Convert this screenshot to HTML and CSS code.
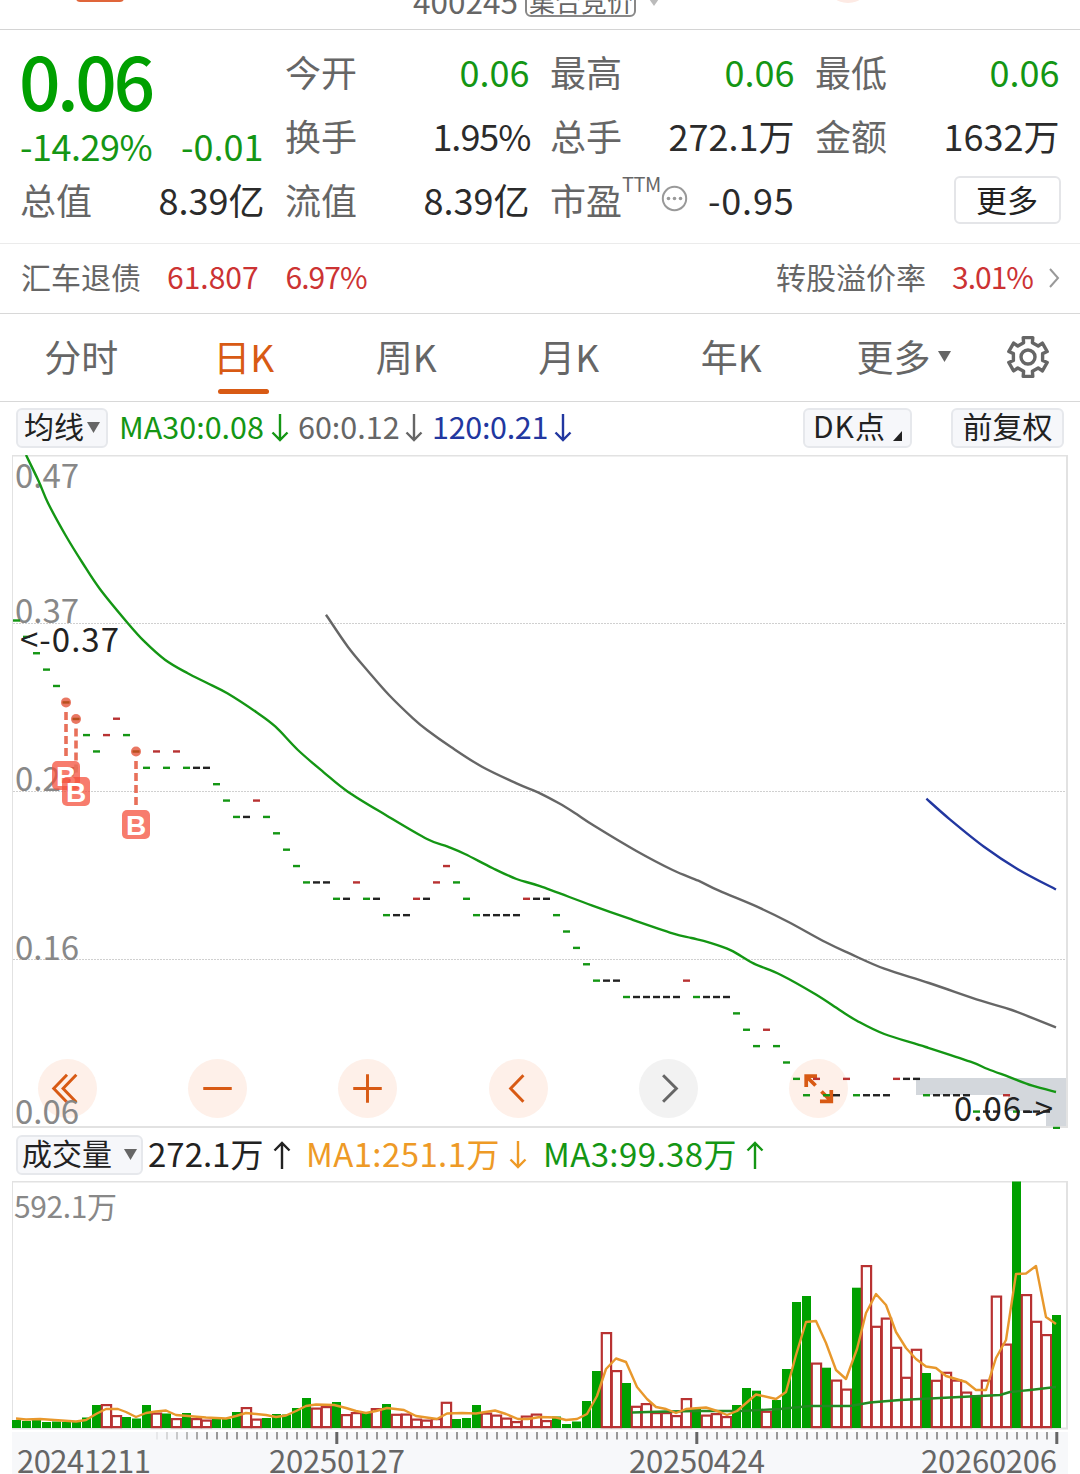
FILE: index.html
```html
<!DOCTYPE html>
<html lang="zh-CN">
<head>
    <meta charset="UTF-8">
    <meta name="viewport" content="width=device-width, initial-scale=1.0">
    <title>400245 日K</title>
    <link rel="stylesheet" href="styles.css">
</head>
<body>
    <header class="titlebar">
        <div class="titlebar-inner">
            <span class="title-badge"></span>
            <span class="code">400245</span>
            <span class="tag">集合竞价</span>
            <svg class="title-caret" width="14" height="10" viewBox="0 0 14 10"><path d="M0 0H14L7 10Z" fill="#bbb"/></svg>
            <span class="title-dot"></span>
        </div>
    </header>

    <section class="quote">
        <div class="price">
            <div class="last">0.06</div>
            <div class="change"><span class="change-rate">-14.29%</span><span>-0.01</span></div>
        </div>
        <div class="cell"><span>今开</span><b class="green">0.06</b></div>
        <div class="cell"><span>最高</span><b class="green">0.06</b></div>
        <div class="cell"><span>最低</span><b class="green">0.06</b></div>
        <div class="cell"><span>换手</span><b class="pct">1.95%</b></div>
        <div class="cell"><span>总手</span><b>272.1万</b></div>
        <div class="cell"><span>金额</span><b>1632万</b></div>
        <div class="cell"><span>总值</span><b>8.39亿</b></div>
        <div class="cell"><span>流值</span><b>8.39亿</b></div>
        <div class="cell">
            <span class="pe">市盈<sup>TTM</sup>
                <svg width="27" height="27" viewBox="0 0 27 27"><circle cx="13.5" cy="13.5" r="11.7" fill="none" stroke="#999" stroke-width="2"/><g fill="#999"><circle cx="7.5" cy="13.5" r="1.8"/><circle cx="13.5" cy="13.5" r="1.8"/><circle cx="19.5" cy="13.5" r="1.8"/></g></svg>
            </span>
            <b class="loss">-0.95</b>
        </div>
        <div class="cell cell-more"><button class="more">更多</button></div>
    </section>

    <section class="bond">
        <span class="bond-name">汇车退债</span>
        <span class="red bond-price">61.807</span>
        <span class="red bond-rate">6.97%</span>
        <span class="bond-label">转股溢价率</span>
        <span class="red bond-premium">3.01%</span>
        <svg width="12" height="20" viewBox="0 0 12 20"><path d="M2 1L10 10L2 19" fill="none" stroke="#999" stroke-width="2"/></svg>
    </section>

    <nav class="tabs">
        <a>分时</a>
        <a class="active">日K</a>
        <a>周K</a>
        <a>月K</a>
        <a>年K</a>
        <a class="tab-more">更多<svg width="13" height="11" viewBox="0 0 13 11"><path d="M0 0H13L6.5 11Z" fill="#666"/></svg></a>
        <a class="tab-gear">
            <svg width="46" height="46" viewBox="-23 -23 46 46" fill="none" stroke="#666" stroke-width="3.4" stroke-linejoin="round">
                <path id="gear"/>
                <circle r="7"/>
            </svg>
        </a>
    </nav>

    <section class="legend legend-ma">
        <button class="chip chip-ma">均线<svg width="13" height="11" viewBox="0 0 13 11"><path d="M0 0H13L6.5 11Z" fill="#666"/></svg></button>
        <span class="legend-item ma30">MA30:0.08<svg class="arrow"><use href="#down"/></svg></span>
        <span class="legend-item ma60">60:0.12<svg class="arrow"><use href="#down"/></svg></span>
        <span class="legend-item ma120">120:0.21<svg class="arrow"><use href="#down"/></svg></span>
        <button class="chip chip-dk">DK点<svg width="9" height="10" viewBox="0 0 9 10"><path d="M9 0V10H0Z" fill="#222"/></svg></button>
        <button class="chip chip-adjust">前复权</button>
    </section>

    <section class="kline">
        <div class="tools">
            <button><svg viewBox="-30 -30 60 60"><path d="M-0.500 -14L-14 0L-0.500 14M9 -14L-4.500 0L9 14"/></svg></button>
            <button><svg viewBox="-30 -30 60 60"><path d="M-14.500 0H14.500"/></svg></button>
            <button><svg viewBox="-30 -30 60 60"><path d="M-14.500 0H14.500M0 -14.500V14.500"/></svg></button>
            <button><svg viewBox="-30 -30 60 60"><path d="M5 -13.500L-8 0L5 13.500"/></svg></button>
            <button class="off"><svg viewBox="-30 -30 60 60"><path d="M-5.500 -13.500L8 0L-5.500 13.500"/></svg></button>
            <button class="expand"><svg viewBox="-30 -30 60 60"><path d="M-1.500 -12.500H-12.500V-1.500M-12.500 -12.500L-3 -3M13 1.500V13H1.500M13 13L3 3"/></svg></button>
        </div>
        <svg class="chart" id="kline" width="1080" height="674" viewBox="0 455 1080 674"></svg>
    </section>

    <section class="legend legend-vol">
        <button class="chip chip-vol">成交量<svg width="13" height="11" viewBox="0 0 13 11"><path d="M0 0H13L6.500 11Z" fill="#666"/></svg></button>
        <span class="legend-item vol">272.1万<svg class="arrow"><use href="#up"/></svg></span>
        <span class="legend-item vma1">MA1:251.1万<svg class="arrow"><use href="#down"/></svg></span>
        <span class="legend-item vma3">MA3:99.38万<svg class="arrow"><use href="#up"/></svg></span>
    </section>

    <svg class="chart" id="volume" width="1080" height="293" viewBox="0 1181 1080 293"></svg>

    <svg width="0" height="0" class="defs">
        <symbol id="down" viewBox="0 0 18 28"><path d="M9 0V26M1.500 18.500L9 26L16.500 18.500" fill="none" stroke="currentColor" stroke-width="2.4"/></symbol>
        <symbol id="up" viewBox="0 0 18 28"><path d="M9 28V2M1.500 9.500L9 2L16.500 9.500" fill="none" stroke="currentColor" stroke-width="2.4"/></symbol>
    </svg>

    <script src="chart.js"></script>
</body>
</html>
```

FILE: styles.css
```css
* {
    box-sizing: border-box;
}

body {
    margin: 0;
    width: 1080px;
    height: 1474px;
    overflow: hidden;
    background-color: #fff;
    color: #666;
    font-family: "Noto Sans CJK SC", sans-serif;
    font-size: 36px;
    line-height: 1;
}

button {
    font-family: inherit;
    line-height: 1;
    padding: 0;
    color: #222;
}

svg {
    display: block;
    flex: none;
}

.defs {
    position: absolute;
}

.green {
    color: #149614;
}

.red {
    color: #cc3333;
}

/* title bar */
.titlebar {
    height: 30px;
    overflow: hidden;
    border-bottom: 1px solid #d4d4d4;
}

.titlebar-inner {
    display: flex;
    align-items: center;
    height: 48px;
    margin-top: -26px;
    padding-left: 76px;
}

.title-badge {
    width: 48px;
    height: 8px;
    border-radius: 5px;
    background-color: #e0653a;
}

.code {
    width: 112px;
    margin-left: 289px;
    padding-top: 5px;
    font-size: 31.5px;
}

.tag {
    width: 111px;
    height: 36px;
    padding-left: 2px;
    margin-top: 1px;
    border: 2px solid #888;
    border-radius: 6px;
    font-size: 26px;
    line-height: 36px;
    white-space: nowrap;
}

.title-caret {
    margin: 6px 0 0 11px;
}

.title-dot {
    width: 46px;
    height: 46px;
    margin: -36px 0 0 164px;
    border-radius: 50%;
    background-color: #fdeae4;
}

/* quote */
.quote {
    display: grid;
    grid-template-columns: repeat(4, 243.500px);
    grid-template-rows: repeat(3, 64px);
    column-gap: 21.500px;
    height: 214px;
    padding: 9px 21px 0;
    border-bottom: 1px solid #ebebeb;
}

.price {
    grid-row: span 2;
    color: #149614;
}

.last {
    height: 82px;
    color: #00a000;
    font-size: 73px;
    font-weight: 500;
    line-height: 80px;
    letter-spacing: -3.500px;
    margin-left: -2px;
}

.change {
    display: flex;
    justify-content: space-between;
    line-height: 48px;
    white-space: nowrap;
    margin: 0 1px 0 -1px;
}

.change-rate {
    letter-spacing: -0.500px;
}

.cell {
    display: flex;
    align-items: center;
    justify-content: space-between;
    white-space: nowrap;
    margin-left: -1px;
}

.cell b {
    font-weight: 400;
    color: #2b2b2b;
}

.cell b.green {
    color: #149614;
}

.cell b.pct {
    letter-spacing: -1px;
    margin-right: -1px;
}

.cell b.loss {
    letter-spacing: 0.800px;
}

.pe {
    display: flex;
    align-items: center;
}

.pe sup {
    font-size: 20px;
    line-height: 1;
    letter-spacing: -0.500px;
    margin-bottom: 30px;
}

.pe svg {
    margin: -1px 0 0 0;
}

.cell-more {
    justify-content: flex-end;
}

.more {
    width: 107px;
    height: 48px;
    margin: 2px -1px 0 0;
    padding-bottom: 4px;
    border: 2px solid #e4e5e8;
    border-radius: 6px;
    background-color: #fff;
    font-size: 31px;
}

/* bond */
.bond {
    display: flex;
    align-items: center;
    height: 70px;
    padding: 0 20px 5px 21px;
    border-bottom: 1px solid #d8d8d8;
    font-size: 30px;
}

.bond svg {
    margin-top: 3px;
}

.bond-price {
    margin-left: 26px;
}

.bond-rate {
    margin-left: 27px;
    letter-spacing: -1px;
}

.bond-label {
    margin-left: auto;
}

.bond-premium {
    margin: 0 15px 0 26px;
    letter-spacing: -1px;
}

/* tabs */
.tabs {
    display: flex;
    height: 88px;
    border-bottom: 1px solid #d8d8d8;
    font-size: 37px;
}

.tabs a {
    display: flex;
    align-items: center;
    justify-content: center;
    width: 162.500px;
    padding-bottom: 2px;
}

.tabs .active {
    position: relative;
    color: #d85a14;
}

.tabs .active::after {
    content: "";
    position: absolute;
    left: 55px;
    bottom: 7px;
    width: 51px;
    height: 5px;
    border-radius: 3px;
    background-color: #d85a14;
}

.tabs .tab-more {
    width: 182px;
    gap: 7px;
}

.tabs .tab-gear {
    width: 66px;
    padding-bottom: 1px;
}

/* legends above each chart */
.legend {
    display: flex;
    align-items: center;
    height: 53px;
    padding: 0 16px;
    font-size: 30.500px;
}

.legend-ma {
    padding-bottom: 2px;
}

.legend-vol {
    font-size: 33px;
}

.legend-item {
    display: flex;
    align-items: center;
    justify-content: space-between;
    white-space: nowrap;
    padding-bottom: 2px;
}

.arrow {
    width: 18px;
    height: 28px;
    margin-top: 2px;
}

.chip {
    display: flex;
    align-items: center;
    justify-content: center;
    height: 40px;
    padding-bottom: 5px;
    border: 2px solid #e6e8ec;
    border-radius: 6px;
    background-color: #f6f7fa;
    font-size: 30px;
    white-space: nowrap;
}

.chip svg {
    margin-top: 4px;
}

.chip-ma {
    width: 92px;
    gap: 3px;
}

.ma30 {
    width: 170px;
    margin-left: 11px;
    color: #149614;
}

.ma60 {
    width: 125px;
    margin-left: 9px;
}

.ma120 {
    width: 140px;
    margin-left: 9px;
    letter-spacing: -0.300px;
    color: #2237a0;
}

.chip-dk {
    width: 109px;
    margin-left: auto;
    gap: 7px;
    letter-spacing: 1px;
}

.chip-dk svg {
    margin-top: 22px;
}

.chip-adjust {
    width: 113px;
    margin-left: 39px;
}

.chip-vol {
    width: 127px;
    gap: 12px;
}

.vol {
    width: 143px;
    margin-left: 5px;
    color: #222;
}

.vma1 {
    width: 221px;
    margin-left: 15px;
    letter-spacing: 0.400px;
    color: #ee9a26;
}

.vma3 {
    width: 221px;
    margin-left: 16px;
    letter-spacing: 0.400px;
    color: #149614;
}

/* charts */
.kline {
    position: relative;
    height: 673px;
}

.chart {
    font-size: 33px;
}

.kline .chart {
    position: relative;
}

.tools {
    position: absolute;
    left: 38px;
    top: 604px;
    display: flex;
    gap: 91.200px;
}

.tools button {
    width: 59px;
    height: 59px;
    border: 0;
    border-radius: 50%;
    background-color: #fef0e9;
}

.tools path {
    fill: none;
    stroke: #d85a14;
    stroke-width: 3;
}

.tools .expand path {
    stroke-width: 3.800;
}

.tools .off {
    background-color: #f2f2f2;
}

.tools .off path {
    stroke: #666;
}

.frame {
    fill: none;
    stroke: #e2e2e2;
    stroke-width: 2;
}

.grid {
    stroke: #d0d0d0;
    stroke-width: 1;
    stroke-dasharray: 2 1;
}

.gap {
    fill: #d3d7dc;
}

.line {
    fill: none;
    stroke-width: 2.4;
    stroke-linejoin: round;
}

.scale {
    fill: #888;
}

.mark {
    fill: #222;
}

.badge {
    fill: #f4503c;
    fill-opacity: 0.75;
}

.badge-text {
    fill: #fff;
    font-family: "Liberation Sans", sans-serif;
    font-size: 28px;
    font-weight: 700;
    text-anchor: middle;
}

.lead {
    stroke: #e8705a;
    stroke-width: 3.600;
    stroke-dasharray: 8 4;
}

.date {
    fill: #666;
    font-size: 31px;
}
```

FILE: chart.js
```js
const NS = 'http://www.w3.org/2000/svg';
const GREEN = '#149614';
const RED = '#b83232';
const BLACK = '#222';

function add(parent, tag, attrs, text) {
    const el = document.createElementNS(NS, tag);
    for (const key in attrs) el.setAttribute(key, attrs[key]);
    if (text) el.textContent = text;
    parent.appendChild(el);
    return el;
}

// smooth curve through the points
function curve(p) {
    let d = `M${p[0]}`;
    for (let i = 0; i < p.length - 1; i++) {
        const a = p[i - 1] || p[i], b = p[i], c = p[i + 1], e = p[i + 2] || c;
        d += `C${b[0] + (c[0] - a[0]) / 6} ${b[1] + (c[1] - a[1]) / 6} ${c[0] - (e[0] - b[0]) / 6} ${c[1] - (e[1] - b[1]) / 6} ${c[0]} ${c[1]}`;
    }
    return d;
}

const xAt = (i) => 16.3 + i * 10;

// ---- gear icon ----
let gear = '';
for (let i = 0; i < 6; i++) {
    [[-14, 20], [14, 20], [17, 15], [43, 15]].forEach(([deg, r], j) => {
        const a = (i * 60 + deg - 90) * Math.PI / 180;
        gear += `${i + j ? 'L' : 'M'}${(r * Math.cos(a)).toFixed(1)} ${(r * Math.sin(a)).toFixed(1)}`;
    });
}
document.getElementById('gear').setAttribute('d', gear + 'Z');

// ---- daily K ----
const k = document.getElementById('kline');
add(k, 'path', { d: 'M916 1078H1068V1128H1046V1111H1008V1095H916Z', class: 'gap' });
[623.5, 791.5, 959.5].forEach((y) => add(k, 'line', { x1: 13, x2: 1067, y1: y, y2: y, class: 'grid' }));
add(k, 'path', { d: 'M12.500 455V1128', class: 'frame', style: 'stroke-width:1' });
add(k, 'path', { d: 'M12 455.500H1067V1127H12', class: 'frame' });

[['0.47', 488], ['0.37', 623], ['0.27', 791], ['0.16', 960], ['0.06', 1124]].forEach(([t, y]) =>
    add(k, 'text', { x: 15, y, class: 'scale', textLength: 64 }, t));

// price steps of 0.01 below 0.37, with the day's colour
const days = ('0g 1g 2g 3g 4g 5g 6g 7g 8g 7r 6r 7g 8g 9g 8r 9g 8r 9g 9k 9k 10g 11g 12g 12k 11r 12g 13g 14g 15g 16g 16k 16k ' +
    '17g 17k 16r 17g 17k 18g 18k 18k 17r 17k 16r 15r 16g 17g 18g 18k 18k 18k 18k 17r 17k 17k 18g 19g 20g 21g 22g 22k 22k ' +
    '23g 23k 23k 23k 23k 23k 22r 23g 23k 23k 23k 24g 25g 26g 25r 26g 27g 28g 29g 28r 29g 29k 28r 29g 29k 29k 29k 28r 28k 28k ' +
    '29g 29k 29k 29k 29k 30g 30k 30k 29r 30g 30k 30k 30k 31g').split(' ');
days.forEach((day, i) => {
    const color = { g: GREEN, r: RED, k: BLACK }[day.slice(-1)];
    const y = 620.5 + parseInt(day, 10) * 16.37;
    add(k, 'rect', { x: xAt(i) - 3.3, y: y - 1.2, width: 7, height: 2.4, fill: color });
});

const ma30 = [[26, 455], [38.6, 481], [48, 503], [65.4, 535], [82.6, 563], [99.9, 589], [127.4, 622.7], [144.6, 641.7], [165.3, 660],
    [187.7, 673.3], [206.6, 682.7], [227.3, 693.3], [256.5, 712.3], [275.5, 726.7], [297.9, 750], [323.7, 772.3], [347.8, 791.7],
    [385.7, 815], [427, 839], [447.7, 846.7], [464.9, 854], [492.4, 868], [516.5, 879], [540, 886.2], [591.7, 905.3], [629.5, 918.7],
    [672.6, 933.3], [691.5, 938], [708.7, 942.3], [731, 950.3], [753.5, 963.3], [781, 975], [815.5, 994.3], [839.6, 1010],
    [856.8, 1020.7], [884.3, 1034], [925.7, 1047], [970.4, 1061.7], [987.7, 1069], [1008.3, 1076.7], [1032.4, 1085.7], [1056, 1092]];
const ma60 = [[326, 614.7], [347.8, 646.7], [368.5, 671.7], [389, 695], [413, 718.3], [427, 730], [451, 747], [482, 766.7],
    [516.5, 783.3], [540, 793.3], [559, 803.3], [574.4, 812.7], [595, 826.3], [636.4, 851], [672.6, 870], [698.4, 880.7],
    [719, 890.7], [757, 906.7], [788, 921.7], [825.8, 942.3], [850, 953.7], [884.3, 968.7], [929, 983], [980.8, 1000.7],
    [1011.8, 1010], [1056, 1027.5]];
const ma120 = [[926.4, 798.7], [949.8, 819.3], [984, 846.7], [1018.7, 869.7], [1056, 889.5]];
add(k, 'path', { d: curve(ma30), class: 'line', stroke: GREEN });
add(k, 'path', { d: curve(ma60), class: 'line', stroke: '#666' });
add(k, 'path', { d: curve(ma120), class: 'line', stroke: '#2237a0' });

// buy points
[[66, 702.4, 775.5], [76, 719, 791.5], [136, 751.5, 824.5]].forEach(([x, y, by]) => {
    add(k, 'circle', { cx: x, cy: y, r: 5, fill: '#e8705a', 'fill-opacity': 0.95 });
    add(k, 'rect', { x: x - 3.5, y: y - 1.2, width: 7, height: 2.4, fill: '#b8501e' });
    add(k, 'line', { x1: x, x2: x, y1: y + 9.5, y2: by - 17, class: 'lead' });
    add(k, 'rect', { x: x - 14, y: by - 14.5, width: 28, height: 29, rx: 5, class: 'badge' });
    add(k, 'text', { x, y: by + 10.5, class: 'badge-text' }, 'B');
});

add(k, 'text', { x: 20, y: 652, class: 'mark', textLength: 99 }, '<-0.37');
add(k, 'text', { x: 954, y: 1121, class: 'mark', textLength: 99 }, '0.06->');

// ---- volume ----
const v = document.getElementById('volume');
add(v, 'rect', { x: 12, y: 1432, width: 1056, height: 42, fill: '#f7f8fa' });
add(v, 'path', { d: 'M12.500 1181V1429', class: 'frame', style: 'stroke-width:1' });
add(v, 'path', { d: 'M12 1181.500H1067V1428.500H12', class: 'frame' });
add(v, 'text', { x: 14, y: 1218, class: 'scale', style: 'font-size:30px', textLength: 103 }, '592.1万');

// top edge of each bar
const bars = ('1420g 1421g 1420g 1422g 1421.5g 1422g 1422g 1417.5g 1405g 1404r 1415r 1417g 1418.5g 1405g 1412.5r 1413.5g 1418r 1413g ' +
    '1418r 1419.5r 1417g 1419g 1412g 1407r 1418.5r 1418g 1414g 1414.5g 1408g 1398g 1407.5r 1406r 1402g 1414r 1412r 1412g 1408r ' +
    '1404g 1413.7r 1413.5r 1418.5r 1419.5r 1418r 1401.7r 1419g 1418g 1405g 1412.5r 1414.5r 1417.5r 1421r 1415.5r 1413.5r 1420r ' +
    '1416.5g 1424g 1421.5g 1401g 1371g 1332r 1370r 1383g 1405.7r 1403r 1412r 1412r 1415r 1398r 1409g 1414.5r 1413r 1416r 1405g ' +
    '1388g 1390.7g 1410.7r 1400g 1369g 1302g 1296g 1362.5r 1367.7g 1379.5r 1388.5r 1287.7g 1265r 1325.7r 1317.5r 1346.7r 1376.7r ' +
    '1348.7r 1373g 1379.7r 1371.7r 1379.5r 1391.5r 1395g 1379.5r 1295.5r 1343.5r 1181.5g 1294r 1320.7r 1334r 1315g').split(' ');
bars.forEach((bar, i) => {
    const top = parseFloat(bar);
    const x = xAt(i);
    if (bar.endsWith('g')) {
        add(v, 'rect', { x: x - 4.3, y: top, width: 9, height: 1428 - top, fill: '#00a000' });
    } else {
        add(v, 'rect', { x: x - 4.5, y: top + 1.1, width: 9.3, height: 1426 - top, fill: '#fff', stroke: RED, 'stroke-width': 2.2 });
    }
});

const vma1 = [[16, 1418.5], [26, 1419.5], [40, 1419], [76, 1421.5], [86, 1420], [96, 1414], [106, 1409], [118, 1409], [126, 1412],
    [136, 1417], [146, 1413], [156, 1411.5], [166, 1410.5], [176, 1415], [206, 1417.5], [226, 1418.5], [236, 1416], [246, 1413],
    [266, 1415], [276, 1417], [286, 1415.5], [296, 1411], [306, 1406], [316, 1404.5], [334, 1405], [346, 1408], [356, 1411],
    [366, 1413], [376, 1411], [387, 1408], [404, 1410], [416, 1416], [437, 1419], [447, 1413.5], [462, 1413], [476, 1413.5],
    [495, 1410.5], [506, 1414], [518, 1419], [528, 1419], [540, 1417], [556, 1417.5], [566, 1420], [577, 1419], [587, 1414],
    [597, 1396], [606, 1369], [616, 1358.5], [626, 1362], [637, 1387], [647, 1399], [656, 1407], [666, 1409], [676, 1413],
    [686, 1409], [706, 1407.5], [714, 1410], [720, 1412], [727, 1415], [737, 1411], [756, 1394.5], [776, 1399], [786, 1392],
    [796, 1355], [806, 1322], [816, 1321], [826, 1343], [836, 1370], [846, 1379], [857, 1349], [866, 1313], [876, 1294],
    [886, 1305], [896, 1332], [906, 1348], [916, 1359], [926, 1366.5], [936, 1368], [946, 1376], [966, 1382], [976, 1390],
    [986, 1390], [996, 1358], [1006, 1340], [1016, 1274], [1026, 1273.5], [1036, 1266], [1046, 1317], [1056, 1324]];
const vma3 = [[632, 1412.5], [666, 1411.5], [700, 1411], [740, 1411], [780, 1409], [810, 1406], [850, 1406], [870, 1402.5],
    [900, 1400], [940, 1398], [1000, 1395], [1010, 1392], [1030, 1390], [1056, 1387]];
add(v, 'polyline', { points: vma3.join(' '), class: 'line', stroke: '#228b22' });
add(v, 'polyline', { points: vma1.join(' '), class: 'line', stroke: '#e8982c' });

// time axis, the ticks fade out under the first date
for (let i = 14; i <= 104; i++) {
    const major = i === 32 || i === 68 || i === 104;
    add(v, 'rect', {
        x: xAt(i) - (major ? 1 : 0.3), y: 1432, width: major ? 3 : 2, height: major ? 12 : 7.5,
        fill: major ? '#666' : '#999', opacity: Math.min(1, (i - 13) / 6)
    });
}
[['20241211', 17, 134], ['20250127', 269, 136], ['20250424', 629, 136], ['20260206', 921, 136]].forEach(([t, x, w]) =>
    add(v, 'text', { x, y: 1473, class: 'date', textLength: w }, t));
```
